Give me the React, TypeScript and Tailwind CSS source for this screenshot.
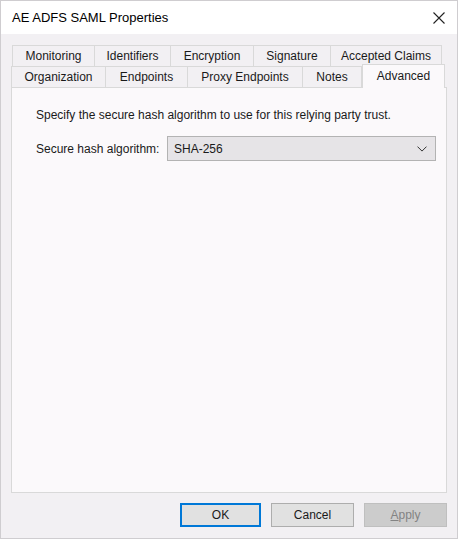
import React from "react";

const row1 = [
  { label: "Monitoring", w: "w-[83px]" },
  { label: "Identifiers", w: "w-[76px]" },
  { label: "Encryption", w: "w-[83px]" },
  { label: "Signature", w: "w-[77px]" },
  { label: "Accepted Claims", w: "w-[111px]" },
];

const row2 = [
  { label: "Organization", w: "w-[95px]" },
  { label: "Endpoints", w: "w-[82px]" },
  { label: "Proxy Endpoints", w: "w-[115px]" },
  { label: "Notes", w: "w-[59px]" },
];

function Tab({ label, w, first }: { label: string; w: string; first?: boolean }) {
  return (
    <div
      className={`${w} h-[21px] flex items-center justify-center border-t border-r border-[#d9d9d9] bg-[#f2f0f3] text-[12px] text-[#1a1a1a] ${
        first ? "border-l" : ""
      }`}
    >
      {label}
    </div>
  );
}

export default function App() {
  return (
    <div
      className="w-[458px] h-[539px] bg-[#f2f0f3] border border-[#cfcdd0] flex flex-col text-[#1a1a1a]"
      style={{ fontFamily: "'Liberation Sans', Arial, sans-serif" }}
    >
      {/* title bar */}
      <div className="h-[33px] bg-white flex items-center justify-between pl-[11px] pr-[12px]">
        <span className="text-[13px] text-black">AE ADFS SAML Properties</span>
        <svg width="12" height="12" viewBox="0 0 12 12">
          <path d="M0.5 0.5 L11.5 11.5 M11.5 0.5 L0.5 11.5" stroke="#222" strokeWidth="1.1" />
        </svg>
      </div>

      <div className="flex-1 flex flex-col px-[10px] pt-[11px]">
        {/* tabs */}
        <div className="flex pl-[1px]">
          {row1.map((t, i) => (
            <Tab key={t.label} label={t.label} w={t.w} first={i === 0} />
          ))}
        </div>
        <div className="flex relative z-10">
          {row2.map((t, i) => (
            <Tab key={t.label} label={t.label} w={t.w} first={i === 0} />
          ))}
          <div className="w-[83px] h-[24px] -mt-[2px] -mb-[1px] flex items-start justify-center pt-[2px] border-t border-l border-r border-[#d9d9d9] bg-[#fbf9fb] text-[12px]">
            Advanced
          </div>
        </div>

        {/* panel */}
        <div className="h-[406px] border border-[#d9d9d9] bg-[#fbf9fb] pl-[24px] pr-[10px] pt-[19px]">
          <p className="text-[12px] leading-[16px]">
            Specify the secure hash algorithm to use for this relying party trust.
          </p>
          <div className="flex items-center mt-[13px]">
            <span className="w-[131px] text-[12px]">Secure hash algorithm:</span>
            <div className="flex-1 h-[25px] border border-[#b3b3b3] bg-[#e6e4e7] flex items-center justify-between pl-[6px] pr-[8px]">
              <span className="text-[12px]">SHA-256</span>
              <svg width="10" height="6" viewBox="0 0 10 6">
                <path d="M0.5 0.6 L5 5.1 L9.5 0.6" fill="none" stroke="#333" strokeWidth="1" />
              </svg>
            </div>
          </div>
        </div>

        {/* buttons */}
        <div className="flex justify-end gap-[10px] mt-[10px]">
          <button className="w-[81px] h-[24px] border-2 border-[#0078d7] bg-[#e1e1e1] text-[12px]">
            OK
          </button>
          <button className="w-[83px] h-[24px] border border-[#adadad] bg-[#e1e1e1] text-[12px]">
            Cancel
          </button>
          <button className="w-[83px] h-[24px] border border-[#bfbfbf] bg-[#cccccc] text-[12px] text-[#838383]">
            <span className="underline">A</span>pply
          </button>
        </div>
      </div>
    </div>
  );
}
